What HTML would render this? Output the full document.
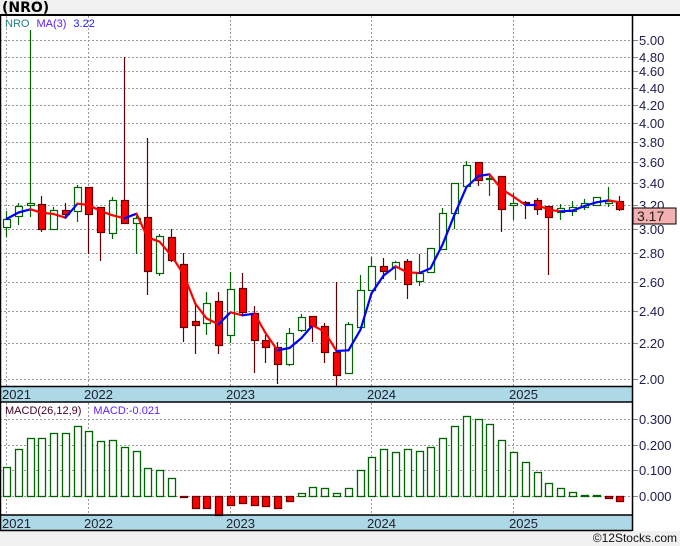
<!DOCTYPE html>
<html><head><meta charset="utf-8"><style>
html,body{margin:0;padding:0;background:#f0f0f0;}
svg{display:block;font-family:"Liberation Sans","DejaVu Sans",sans-serif;}
</style></head><body>
<svg id="s" width="680" height="546" xmlns="http://www.w3.org/2000/svg">
<rect x="0" y="0" width="680" height="546" fill="#f0f0f0"/>
<text x="2" y="12" font-size="14" font-weight="bold" fill="#000" font-family="DejaVu Sans, sans-serif">(NRO)</text>
<rect x="0" y="14" width="680" height="517" fill="#fff"/>
<g id="grid" stroke="#999" stroke-width="1" stroke-dasharray="2,2"></g>
<rect x="0" y="387" width="632" height="15" fill="#add8e6"/>
<rect x="0" y="515" width="632" height="15" fill="#add8e6"/>
<g id="c"></g>
<g id="lbl" font-size="13" fill="#202050"></g>
<line x1="0" y1="15" x2="680" y2="15" stroke="#000" stroke-width="2"/>
<line x1="0" y1="386.5" x2="632" y2="386.5" stroke="#000" stroke-width="1.5"/>
<line x1="0" y1="402" x2="632" y2="402" stroke="#000" stroke-width="1.5"/>
<line x1="0" y1="515" x2="632" y2="515" stroke="#000" stroke-width="1.5"/>
<line x1="0" y1="530.5" x2="632" y2="530.5" stroke="#000" stroke-width="1.5"/>
<line x1="632.5" y1="14" x2="632.5" y2="531" stroke="#000" stroke-width="1.5"/>
<line x1="0.5" y1="14" x2="0.5" y2="531" stroke="#000" stroke-width="1.5"/>
<text x="5" y="27" font-size="11"><tspan fill="#208080">NRO</tspan><tspan fill="#6020ff" dx="7">MA(3)</tspan><tspan fill="#2020ff" dx="7">3.22</tspan></text>
<text x="5" y="414" font-size="11"><tspan fill="#400020">MACD(26,12,9)</tspan><tspan fill="#6020ff" dx="12">MACD:-0.021</tspan></text>
<rect x="633" y="208" width="43" height="16" fill="#f4b0b0" stroke="#000" stroke-width="1"/>
<text x="637" y="221" font-size="14" fill="#202020">3.17</text>
<text x="677" y="542" font-size="12" fill="#111" text-anchor="end">©12Stocks.com</text>
</svg>
<script>
var NS="http://www.w3.org/2000/svg";
function el(p,t,a,txt){var e=document.createElementNS(NS,t);for(var k in a)e.setAttribute(k,a[k]);if(txt)e.textContent=txt;p.appendChild(e);return e;}
var g=document.getElementById('grid'),c=document.getElementById('c'),L=document.getElementById('lbl');
var py=[[5.00,40],[4.80,57],[4.60,71],[4.40,88],[4.20,105],[4.00,123],[3.80,142],[3.60,162],[3.40,183],[3.20,205],[3.00,229],[2.80,253],[2.60,282],[2.40,311],[2.20,343],[2.00,379]];
py.forEach(function(p){el(g,'line',{x1:0,x2:632,y1:p[1]+.5,y2:p[1]+.5});el(c,'line',{x1:632,x2:638,y1:p[1]+.5,y2:p[1]+.5,stroke:'#888'});el(L,'text',{x:639,y:p[1]+5},p[0].toFixed(2));});
[[0.3,419],[0.2,445],[0.1,470],[0,496]].forEach(function(p){el(g,'line',{x1:0,x2:632,y1:p[1]+.5,y2:p[1]+.5});el(c,'line',{x1:632,x2:638,y1:p[1]+.5,y2:p[1]+.5,stroke:'#888'});el(L,'text',{x:639,y:p[1]+5},p[0].toFixed(3));});
[6,88,230,371,513].forEach(function(x,i){el(g,'line',{x1:x+.5,x2:x+.5,y1:16,y2:386});el(g,'line',{x1:x+.5,x2:x+.5,y1:403,y2:515});
el(c,'text',{x:x-4,y:399,'font-size':13,fill:'#202030'},String(2021+i));el(c,'text',{x:x-4,y:528,'font-size':13,fill:'#202030'},String(2021+i));});
var C=[[3,219,227,211,237,1],[15,206,216,203,225,1],[27,203,205,30,217,1],[38,204,229,196,232,0],[50,210,229,207,229,1],[62,210,214,203,217,0],[74,187,211,185,222,1],[85,187,214,187,254,0],[97,207,232,207,261,0],[109,200,233,197,239,1],[121,200,223,57,223,0],[133,218,223,213,254,1],[144,217,271,138,295,0],[156,236,273,234,276,1],[168,237,260,229,262,0],[180,264,327,253,342,0],[192,321,325,303,354,0],[203,303,323,292,335,1],[215,301,345,292,354,0],[227,289,335,272,343,1],[239,288,312,273,315,0],[251,313,340,306,373,0],[262,340,347,335,363,0],[274,347,364,342,384,0],[286,333,364,328,366,1],[298,317,330,314,332,1],[309,316,326,316,342,0],[321,326,352,323,363,0],[333,352,375,282,387,0],[345,324,373,322,373,1],[357,290,327,275,327,1],[368,266,290,257,290,1],[380,266,271,258,279,0],[392,262,267,261,280,1],[404,261,284,259,299,0],[416,273,281,254,286,1],[427,248,272,248,272,1],[439,213,249,208,249,1],[451,183,213,183,229,1],[463,165,186,161,186,1],[475,162,180,162,186,0],[486,178,179,173,196,1],[498,176,209,176,232,0],[510,203,205,193,220,1],[522,202,203,201,219,0],[534,200,209,198,215,0],[545,206,217,206,275,0],[557,208,212,204,220,1],[569,207,211,201,216,1],[581,203,207,199,210,1],[593,197,205,197,205,1],[605,201,203,187,207,1],[616,201,209,196,211,0]];
var closes=[];
C.forEach(function(d){var x=d[0]+3.5;var col=d[5]?'#006400':'#600000';
el(c,'line',{x1:x,x2:x,y1:d[3],y2:d[4],stroke:col,'stroke-width':1.2});
el(c,'rect',{x:d[0]+.5,y:d[1]+.5,width:7,height:Math.max(1,d[2]-d[1]),fill:d[5]?'#fff':'#ff0000',stroke:col,'stroke-width':1.2});
closes.push(d[5]?d[1]:d[2]);});
var ma=[];for(var i=0;i<closes.length;i++){var s=0,n=0;for(var j=Math.max(0,i-2);j<=i;j++){s+=closes[j];n++;}ma.push(s/n);}
for(var i=1;i<ma.length;i++){var col=ma[i]<=ma[i-1]?'#0000ff':'#ff0000';
el(c,'line',{x1:C[i-1][0]+3.5,y1:ma[i-1],x2:C[i][0]+3.5,y2:ma[i],stroke:col,'stroke-width':2.2,'stroke-linecap':'round'});}
var M=[467,449,438,438,433,433,426,431,441,440,447,451,468,470,478,497,508,508,515,505,503,505,506,508,501,493,487,488,493,488,470,457,449,452,449,451,447,438,426,416,419,424,440,452,462,472,483,488,492,495,495,498,501];
M.forEach(function(v,i){var x=C[i][0]+.5;
if(v<496){el(c,'rect',{x:x,y:v+.5,width:7,height:496-v,fill:'#fff',stroke:'#006400','stroke-width':1.3});}
else{el(c,'rect',{x:x,y:496.5,width:7,height:Math.max(1,v-496),fill:'#ff0000',stroke:'#700000','stroke-width':1.3});}});
</script>
</body></html>
